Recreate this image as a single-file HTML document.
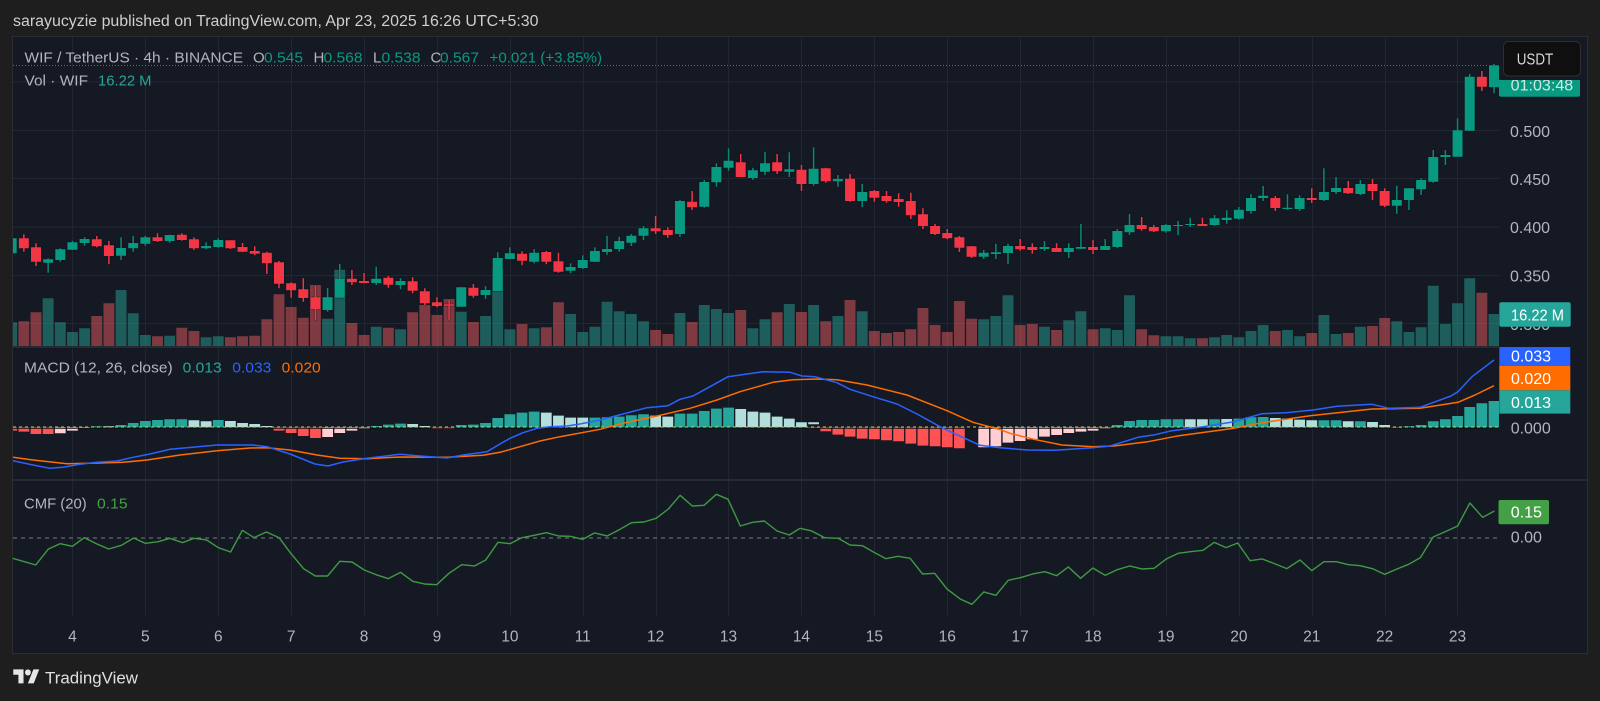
<!DOCTYPE html>
<html>
<head>
<meta charset="utf-8">
<style>
html,body{margin:0;padding:0;background:#1e1e1e;width:1600px;height:701px;overflow:hidden}
svg{display:block;filter:blur(.35px)}
text{font-family:"Liberation Sans",sans-serif}
.cs{filter:drop-shadow(0 0 .8px #090b10)}
</style>
</head>
<body>
<svg width="1600" height="701" viewBox="0 0 1600 701" xmlns="http://www.w3.org/2000/svg">
<defs>
<clipPath id="pm"><rect x="13" y="37" width="1486" height="309"/></clipPath>
<clipPath id="pa"><rect x="13" y="347" width="1486" height="133"/></clipPath>
<clipPath id="cd"><rect x="1499" y="80" width="82" height="18"/></clipPath>
</defs>
<rect width="1600" height="701" fill="#1e1e1e"/>
<text x="13" y="26" font-size="15.5" fill="#cfcfcf" textLength="525.5" lengthAdjust="spacingAndGlyphs">sarayucyzie published on TradingView.com, Apr 23, 2025 16:26 UTC+5:30</text>
<rect x="12.5" y="36.5" width="1575" height="617" fill="#151924" stroke="#2c2d30"/>

<!-- grid -->
<path stroke="#232733" stroke-width="1" fill="none" d="M13 82H1499M13 130.5H1499M13 178.5H1499M13 227H1499M13 275.5H1499M13 323.5H1499"/>
<path stroke="#222631" stroke-width="1" fill="none" d="M72.5 37V615.5M145.5 37V615.5M218.5 37V615.5M291.5 37V615.5M364.5 37V615.5M437.5 37V615.5M510.5 37V615.5M583.5 37V615.5M656.5 37V615.5M728.5 37V615.5M801.5 37V615.5M874.5 37V615.5M947.5 37V615.5M1020.5 37V615.5M1093.5 37V615.5M1166.5 37V615.5M1239.5 37V615.5M1312.5 37V615.5M1385.5 37V615.5M1457.5 37V615.5"/>
<path stroke="#262a35" stroke-width="2" fill="none" d="M13 347H1499M13 480H1587"/>

<g clip-path="url(#pm)">
<!-- volume -->
<path fill="none" stroke="#26a495" stroke-opacity=".5" stroke-width="10.9" d="M11.7 322.3V346M48.15 298.3V346M60.3 322.3V346M72.45 332V346M84.6 328.3V346M121.05 290V346M133.2 313.3V346M145.35 335V346M169.65 335.7V346M206.1 337.3V346M218.25 336.3V346M327.6 318.7V346M339.75 269.7V346M376.2 326.7V346M400.5 329.3V346M461.25 311.7V346M485.55 316V346M497.7 269.3V346M509.85 329.3V346M534.15 328.3V346M570.6 314V346M582.75 332V346M594.9 326.7V346M607.05 301.7V346M619.2 311.3V346M631.35 314V346M643.5 321.3V346M679.95 313V346M704.25 305V346M716.4 309V346M728.55 313V346M752.85 328.3V346M765 319.3V346M789.3 304V346M813.6 305V346M837.9 316V346M862.2 311.3V346M983.7 319.3V346M995.85 316V346M1008 295.3V346M1044.45 326.7V346M1068.75 320.3V346M1080.9 311.3V346M1105.2 328.3V346M1117.35 330V346M1129.5 295.3V346M1165.95 336.3V346M1178.1 336.3V346M1190.25 338.3V346M1214.55 337.3V346M1226.7 335V346M1238.85 337.3V346M1251 331V346M1263.15 325V346M1287.45 330V346M1299.6 336.3V346M1323.9 315V346M1336.05 334V346M1360.35 326.7V346M1396.8 321.3V346M1408.95 332V346M1421.1 327.3V346M1433.25 285.7V346M1445.4 324V346M1457.55 303.3V346M1469.7 278.3V346M1494 314V346"/>
<path fill="none" stroke="#ea5a5b" stroke-opacity=".5" stroke-width="10.9" d="M23.85 321.3V346M36 312.3V346M96.75 316V346M108.9 303.3V346M157.5 336.3V346M181.8 327.7V346M193.95 331V346M230.4 337.3V346M242.55 336.3V346M254.7 335.7V346M266.85 319.3V346M279 294.3V346M291.15 307V346M303.3 317.7V346M315.45 285V346M351.9 323V346M364.05 335V346M388.35 327.7V346M412.65 312.3V346M424.8 305V346M436.95 315V346M449.1 299V346M473.4 322V346M522 324V346M546.3 327.3V346M558.45 302.3V346M655.65 330V346M667.8 334V346M692.1 322V346M740.7 310V346M777.15 312.3V346M801.45 312V346M825.75 321.3V346M850.05 300V346M874.35 331V346M886.5 333V346M898.65 332V346M910.8 329.3V346M922.95 308V346M935.1 325V346M947.25 332V346M959.4 301V346M971.55 318.7V346M1020.15 325V346M1032.3 324V346M1056.6 330V346M1093.05 329.3V346M1141.65 329.3V346M1153.8 335.3V346M1202.4 338.3V346M1275.3 331V346M1311.75 333V346M1348.2 333V346M1372.5 326V346M1384.65 318V346M1481.85 292.7V346"/>

<g class="cs">
<!-- green candles -->
<path fill="none" stroke="#0a8a75" stroke-width="1.5" d="M48.15 258.3V272.7M60.3 248.3V261.7M72.45 240.7V250M84.6 237.3V245.7M121.05 237.3V260M133.2 236V251.7M145.35 235.7V245.7M169.65 234.7V242.7M206.1 242.3V249.3M218.25 238.3V247.7M327.6 288V311.7M339.75 264V298.3M376.2 266.7V285M400.5 278.3V289.3M461.25 287.3V306.7M485.55 286.3V299M497.7 252.3V291M509.85 247.3V259.3M534.15 249V263.3M570.6 263.3V273.3M582.75 255.3V269M594.9 247.3V262M607.05 235.7V254.7M619.2 236.7V251.7M631.35 234V246M643.5 226V240M679.95 200V236.7M704.25 180V207.7M716.4 163.3V186.7M728.55 148.3V170.7M752.85 167.7V180M765 151.7V175M789.3 152.3V177M813.6 147.3V185.7M837.9 175V186.7M862.2 184V207.3M983.7 250V259M995.85 243.7V259M1008 243.7V263.7M1044.45 241V251M1068.75 243.3V258M1080.9 224V249M1105.2 239V250M1117.35 229V248.3M1129.5 214V235M1165.95 224V232.7M1178.1 221V235M1190.25 217.7V227M1214.55 215V226M1226.7 210.3V223.7M1238.85 207V219.7M1251 194.3V213.7M1263.15 186V201M1287.45 194.3V209.7M1299.6 195.3V211M1323.9 168.3V201M1336.05 177V194M1360.35 180V195M1396.8 185.7V213.7M1408.95 188.3V210M1421.1 178.3V195M1433.25 150V182.7M1445.4 150V165M1457.55 118.3V156.7M1469.7 74V130.7M1494 64V93.3"/>
<path fill="none" stroke="#089981" stroke-width="10" d="M11.7 238.3V253.3M48.15 259.3V262.7M60.3 249.3V260M72.45 242.3V249.7M84.6 239V243M121.05 248V255.7M133.2 243V248.3M145.35 237.3V243.7M169.65 235V241M206.1 246V248.3M218.25 240V247M327.6 297.3V310M339.75 278.7V297.7M376.2 278.7V283M400.5 281V285M461.25 287.3V306.7M485.55 290V295M497.7 258V291M509.85 253.3V259M534.15 252.7V261.7M570.6 267V270.7M582.75 260V268M594.9 251V261.7M607.05 249V252M619.2 241V249M631.35 235.7V242.7M643.5 228.3V235.7M679.95 201V234M704.25 182V206.7M716.4 167V182.3M728.55 160.7V167.7M752.85 170.3V178M765 163.3V171.7M789.3 169.3V171.7M813.6 168.7V184M837.9 179V181.3M862.2 192V201M983.7 252.7V256.7M995.85 252.3V254M1008 246V253M1044.45 247V249M1068.75 248V252M1080.9 247V248.7M1105.2 246V250M1117.35 231V247M1129.5 225V232.3M1165.95 225V231.3M1178.1 225V226M1190.25 224V225M1214.55 218.3V225M1226.7 217.7V220M1238.85 209.7V218.7M1251 198V211M1263.15 195.7V198M1287.45 207.7V209M1299.6 198V209M1323.9 192V200M1336.05 188V192M1360.35 184V194M1396.8 200V205.7M1408.95 188.3V200M1421.1 180V189.3M1433.25 157V181.7M1445.4 155V157M1457.55 130.3V156.7M1469.7 76.7V130.7M1494 65.3V87.3"/>

<!-- red candles -->
<path fill="none" stroke="#f23645" stroke-width="1.5" d="M23.85 234.3V251.7M36 243.3V266M96.75 236V247.3M108.9 241V264.3M157.5 233.3V242M181.8 233.3V240.7M193.95 237.3V250M230.4 240.3V249M242.55 243V252.3M254.7 246.3V255.3M266.85 251.7V274M279 261V288.3M291.15 282.3V297.7M303.3 278.3V301.7M315.45 286V320M351.9 270V285M364.05 273V283.3M388.35 276V287.7M412.65 277.3V293.3M424.8 288.3V305M436.95 297.3V307.3M449.1 300V320M473.4 284V297.7M522 251.3V265.3M546.3 251V264.3M558.45 252.7V272.7M655.65 216V234M667.8 227.3V237.7M692.1 191V210M740.7 154V177M777.15 154V174M801.45 165V191M825.75 167.7V182.7M850.05 174V201.7M874.35 190V201.7M886.5 191V202.7M898.65 193.3V206.7M910.8 192.7V219M922.95 208.3V229M935.1 224V235M947.25 229V239.3M959.4 236V252M971.55 246V258M1020.15 239V250.7M1032.3 243.3V253.7M1056.6 243.3V252M1093.05 240V254M1141.65 217V230.7M1153.8 225V232M1202.4 217.7V226M1275.3 196V211M1311.75 188.3V203M1348.2 181V194M1372.5 179V200M1384.65 188.3V207M1481.85 71V91"/>
<path fill="none" stroke="#f23645" stroke-width="10" d="M23.85 238.3V248.3M36 247.3V261.7M96.75 239.3V246.3M108.9 245.3V256M157.5 237.3V241M181.8 234.7V240M193.95 239.3V248.3M230.4 240.3V248.3M242.55 247V251.7M254.7 251V253.7M266.85 252.7V263.3M279 262.3V283.7M291.15 283.3V290.3M303.3 289.3V298M315.45 297.3V309.3M351.9 278.7V282.3M364.05 281V283M388.35 277.7V284.7M412.65 281.3V290.7M424.8 291.3V303.3M436.95 302.3V306M449.1 304.3V305.7M473.4 287.7V295.7M522 253.7V260.7M546.3 252V261.7M558.45 261.3V271.7M655.65 228.3V231.3M667.8 230V235M692.1 201.7V207.3M740.7 162.3V177M777.15 162.3V171.3M801.45 169.7V184M825.75 168.3V181.3M850.05 178.7V201M874.35 191V197.7M886.5 196V201M898.65 199V202M910.8 201V215.3M922.95 214.3V226M935.1 226V234M947.25 233V238.3M959.4 237.3V247.7M971.55 246.3V256.7M1020.15 246V249.3M1032.3 247V250M1056.6 248V252M1093.05 247V250M1141.65 225V229M1153.8 227V231.3M1202.4 224V226M1275.3 198V208M1311.75 198V200M1348.2 188V193.3M1372.5 184V191M1384.65 191V205.7M1481.85 76.7V86.7"/>
</g>
</g>

<!-- dotted last price -->
<path stroke="#089981" stroke-width="1" stroke-dasharray="1 2" fill="none" d="M13 65.5H1489"/>

<!-- MACD histogram -->
<g clip-path="url(#pa)" fill="none" stroke-width="10.8">
<path stroke="#ff5252" d="M11.7 427.3V430.6M23.85 427.3V431.6M36 427.3V434M48.15 427.3V434M279 427.3V430.6M291.15 427.3V433M303.3 427.3V436M315.45 427.3V438M436.95 427.3V429M449.1 427.3V429M813.6 427.3V428.6M825.75 427.3V431.3M837.9 427.3V434.6M850.05 427.3V436.6M862.2 427.3V438.6M874.35 427.3V439.3M886.5 427.3V440.3M898.65 427.3V441.3M910.8 427.3V443.6M922.95 427.3V445.6M935.1 427.3V446.3M947.25 427.3V447.3M959.4 427.3V448.3M1396.8 427.3V428.3"/>
<path stroke="#ffcdd2" d="M60.3 427.3V433.3M72.45 427.3V430.6M84.6 427.3V428M327.6 427.3V437M339.75 427.3V433M351.9 427.3V430.6M364.05 427.3V429M983.7 427.3V447.3M995.85 427.3V446.3M1008 427.3V442.6M1020.15 427.3V441M1032.3 427.3V439.3M1044.45 427.3V436.6M1056.6 427.3V435M1068.75 427.3V433M1080.9 427.3V431.6M1093.05 427.3V430.6M1105.2 427.3V429"/>
<path stroke="#26a69a" d="M96.75 427.3V426.3M121.05 427.3V425M133.2 427.3V423M145.35 427.3V421M157.5 427.3V420M169.65 427.3V419.3M181.8 427.3V419.3M218.25 427.3V420M376.2 427.3V426M388.35 427.3V424.6M400.5 427.3V423.6M461.25 427.3V425M473.4 427.3V424.6M485.55 427.3V423M497.7 427.3V418M509.85 427.3V414.3M522 427.3V412.6M534.15 427.3V411.6M594.9 427.3V417.6M607.05 427.3V417.3M619.2 427.3V416.6M631.35 427.3V415.3M643.5 427.3V414.3M679.95 427.3V413.6M692.1 427.3V413.6M704.25 427.3V411M716.4 427.3V408.6M728.55 427.3V407.6M1117.35 427.3V425M1129.5 427.3V421M1141.65 427.3V420M1153.8 427.3V420M1165.95 427.3V419.3M1178.1 427.3V419.3M1214.55 427.3V419.3M1238.85 427.3V418.6M1251 427.3V417.3M1263.15 427.3V417M1323.9 427.3V420.3M1336.05 427.3V420.3M1360.35 427.3V421.3M1408.95 427.3V426.3M1421.1 427.3V425M1433.25 427.3V421.3M1445.4 427.3V419.3M1457.55 427.3V416M1469.7 427.3V407M1481.85 427.3V403.3M1494 427.3V401"/>
<path stroke="#b2dfdb" d="M108.9 427.3V426.3M193.95 427.3V420.3M206.1 427.3V421.3M230.4 427.3V421M242.55 427.3V423M254.7 427.3V424M266.85 427.3V426M412.65 427.3V424M424.8 427.3V426M546.3 427.3V412.6M558.45 427.3V415.6M570.6 427.3V417.6M582.75 427.3V417.6M655.65 427.3V415.6M667.8 427.3V416.6M740.7 427.3V409M752.85 427.3V411.6M765 427.3V412.6M777.15 427.3V416.6M789.3 427.3V418.6M801.45 427.3V422.3M813.6 422.3V424.3M1190.25 427.3V419.3M1202.4 427.3V419.3M1226.7 427.3V419M1275.3 427.3V418M1287.45 427.3V418.6M1299.6 427.3V419.6M1311.75 427.3V420.3M1348.2 427.3V421.3M1372.5 427.3V422M1384.65 427.3V425"/>
<path stroke="#0d0f14" stroke-width="1" d="M13 428.3H1499"/>
<path stroke="#d8cc4a" stroke-width="1" stroke-dasharray="3 3" d="M13 427H1499"/>
<!-- MACD lines -->
<polyline stroke="#ff6d00" stroke-width="1.5" stroke-linejoin="round" points="13,457.3 33,460 67,463.7 100,463 123,462.3 147,460 180,455 217,450.7 250,448 267,447.7 290,450 317,455 340,458.3 367,458.7 400,457 447,457.3 483,455.3 500,452.3 520,446.7 540,441 560,436.7 600,429.3 627,422.3 657,416 690,408.3 717,400 740,391.7 773,382.3 793,379.7 817,379 837,379.7 867,385 907,395 947,410.7 973,422.3 1000,429.5 1010,433.3 1034,439.3 1062,445 1093,446.7 1114,446 1148,441.7 1179,435.7 1234,428.3 1262,422.7 1310,415.7 1372,409 1420,408.3 1458,402.3 1475,395 1494,385.7"/>
<polyline stroke="#2962ff" stroke-width="1.5" stroke-linejoin="round" points="13,460.7 33,465 50,468.3 63,467.3 80,464.3 97,462.3 117,461 133,457.3 150,454 170,449.3 187,447.7 217,445 253,445 267,446.7 290,454 315,464 328,466 343,462 367,458.3 400,454.3 420,456 447,458 463,455 487,451.7 500,444 510,438.3 523,432.7 537,428.3 550,426.7 567,426 580,424 600,420 623,414 647,407.7 668,405.7 680,399.3 693,396 710,386.7 728,376.7 747,374 763,371.7 790,372.3 802,376 815,376.7 837,382.7 850,389.3 873,396.7 897,404 917,414 943,428.3 967,439.3 980,445.3 1000,447.8 1027.5,450 1055,450.3 1093,447.7 1110,446 1138,437.3 1155,434.7 1172,430.7 1203,426.7 1234,421.7 1262,413.7 1286,412.7 1313,410 1337,406.3 1372,404.3 1389,408.3 1420,407.3 1451,396 1458,391.7 1472,376.7 1494,360"/>
</g>

<!-- CMF -->
<path stroke="#787b86" stroke-width="1" stroke-dasharray="4 4" fill="none" d="M13 538H1498"/>
<g fill="none" stroke="#3f9a44" stroke-width="1.4" stroke-linejoin="round">
<polyline transform="translate(0,470) scale(.5102,.3333)" style="vector-effect:non-scaling-stroke" points="25,265 70,285 95,237 118,221 142,229 165,203 190,222 213,237 238,226 262,204 285,220 310,215 333,205 358,218 380,205 405,210 428,233 452,246 475,181 498,203 522,186 547,203 570,250 595,296 618,318 642,318 666,274 690,276 714,300 737,314 761,326 785,307 809,334 832,342 856,344 880,310 905,284 930,288 952,270 976,217 1000,221 1023,203 1047,196 1071,188 1095,198 1118,199 1142,208 1165,189 1190,198 1215,178 1238,158 1262,156 1286,145 1310,117 1333,76 1357,108 1380,106 1404,73 1427,88 1451,168 1475,157 1498,153 1523,183 1547,195 1568,175"/>
<polyline transform="translate(800,470) scale(.5102,.3333)" style="vector-effect:non-scaling-stroke" points="0,175 23,183 48,203 75,205 98,225 122,227 145,247 168,266 192,259 216,265 240,312 264,310 288,357 314,387 337,403 360,366 384,376 408,331 432,323 456,312 480,305 503,317 526,291 550,325 574,294 598,316 622,299 646,288 670,297 694,295 718,267 741,250 765,245 790,241 812,217 835,233 858,219 882,272 906,267 930,281 954,296 980,270 1003,302 1027,275 1051,275 1075,284 1098,287 1122,296 1146,313 1170,297 1193,283 1216,263 1241,201 1265,185 1289,168 1313,99 1338,142 1361,123"/>
</g>

<!-- legend -->
<g font-size="15" fill="#b2b5be">
<text x="24.5" y="62.5" textLength="218.5" lengthAdjust="spacingAndGlyphs">WIF / TetherUS · 4h · BINANCE</text>
<text x="253" y="62.5">O</text><text x="264" y="62.5" fill="#089981" textLength="39" lengthAdjust="spacingAndGlyphs">0.545</text>
<text x="313.5" y="62.5">H</text><text x="323.5" y="62.5" fill="#089981" textLength="39" lengthAdjust="spacingAndGlyphs">0.568</text>
<text x="373" y="62.5">L</text><text x="381.5" y="62.5" fill="#089981" textLength="39" lengthAdjust="spacingAndGlyphs">0.538</text>
<text x="430.5" y="62.5">C</text><text x="440" y="62.5" fill="#089981" textLength="39" lengthAdjust="spacingAndGlyphs">0.567</text>
<text x="489.5" y="62.5" fill="#089981" textLength="112.5" lengthAdjust="spacingAndGlyphs">+0.021 (+3.85%)</text>
<text x="24.5" y="85.3" textLength="63.5" lengthAdjust="spacingAndGlyphs">Vol · WIF</text>
<text x="98" y="85.3" fill="#26a69a" textLength="53.5" lengthAdjust="spacingAndGlyphs">16.22 M</text>
<text x="24" y="372.7" textLength="148.7" lengthAdjust="spacingAndGlyphs">MACD (12, 26, close)</text>
<text x="182.7" y="372.7" fill="#26a69a" textLength="39" lengthAdjust="spacingAndGlyphs">0.013</text>
<text x="232.3" y="372.7" fill="#2962ff" textLength="39" lengthAdjust="spacingAndGlyphs">0.033</text>
<text x="281.7" y="372.7" fill="#ff6d00" textLength="39" lengthAdjust="spacingAndGlyphs">0.020</text>
<text x="24" y="508.3" textLength="62.7" lengthAdjust="spacingAndGlyphs">CMF (20)</text>
<text x="97" y="508.3" fill="#43a047" textLength="30.6" lengthAdjust="spacingAndGlyphs">0.15</text>
</g>

<!-- price axis -->
<g font-size="16" fill="#b2b5be">
<text x="1510" y="136.8">0.500</text>
<text x="1510" y="184.8">0.450</text>
<text x="1510" y="233">0.400</text>
<text x="1510" y="281.5">0.350</text>
<text x="1510" y="329.8">0.300</text>
<text x="1510.7" y="433.3">0.000</text>
<text x="1510.7" y="542.7" textLength="31.3" lengthAdjust="spacingAndGlyphs">0.00</text>
</g>

<!-- countdown -->
<g clip-path="url(#cd)">
<rect x="1499" y="76" width="81" height="20.7" rx="2" fill="#089981"/>
<text x="1510.7" y="90.3" font-size="16" fill="#cfe9e4" textLength="62.5" lengthAdjust="spacingAndGlyphs">01:03:48</text>
</g>
<rect x="1503.5" y="41.5" width="77" height="34.5" rx="5" fill="#0f0f0f" stroke="#2e2e2e"/>
<text x="1516.7" y="64.3" font-size="16" fill="#d9d9d9" textLength="36.5" lengthAdjust="spacingAndGlyphs">USDT</text>

<!-- volume label -->
<rect x="1499.3" y="302.3" width="71.4" height="24.4" rx="2" fill="#26a69a"/>
<text x="1511" y="320.7" font-size="16" fill="#ffffff" textLength="53" lengthAdjust="spacingAndGlyphs">16.22 M</text>

<!-- MACD labels -->
<rect x="1499.3" y="347" width="71" height="19" fill="#2962ff"/>
<text x="1511" y="361.7" font-size="16" fill="#fff">0.033</text>
<rect x="1499.3" y="366" width="71" height="24.3" fill="#ff6d00"/>
<text x="1511" y="384.2" font-size="16" fill="#fff">0.020</text>
<rect x="1499.3" y="390.3" width="71" height="23.3" fill="#26a69a"/>
<text x="1511" y="408" font-size="16" fill="#fff">0.013</text>

<!-- CMF label -->
<rect x="1498.5" y="500" width="50.5" height="24.3" rx="2" fill="#43a047"/>
<text x="1510.7" y="517.7" font-size="16" fill="#fff" textLength="31.3" lengthAdjust="spacingAndGlyphs">0.15</text>

<!-- time axis -->
<g font-size="15.5" fill="#b2b5be" text-anchor="middle">
<text x="72.45" y="641.7">4</text><text x="145.35" y="641.7">5</text><text x="218.25" y="641.7">6</text><text x="291.15" y="641.7">7</text><text x="364.05" y="641.7">8</text><text x="436.95" y="641.7">9</text><text x="509.85" y="641.7">10</text><text x="582.75" y="641.7">11</text><text x="655.65" y="641.7">12</text><text x="728.55" y="641.7">13</text><text x="801.45" y="641.7">14</text><text x="874.35" y="641.7">15</text><text x="947.25" y="641.7">16</text><text x="1020.15" y="641.7">17</text><text x="1093.05" y="641.7">18</text><text x="1165.95" y="641.7">19</text><text x="1238.85" y="641.7">20</text><text x="1311.75" y="641.7">21</text><text x="1384.65" y="641.7">22</text><text x="1457.55" y="641.7">23</text>
</g>

<!-- logo -->
<g transform="translate(13.3,666.2) scale(.73,.78)" fill="#e6e6e6">
<path d="M14 22H7V11H0V4h14v18zM28 22h-8l7.5-18h8L28 22z"/>
<circle cx="20" cy="8" r="4"/>
</g>
<text x="45" y="683.3" font-size="16.5" fill="#e0e0e0" textLength="93" lengthAdjust="spacingAndGlyphs">TradingView</text>
</svg>
</body>
</html>
